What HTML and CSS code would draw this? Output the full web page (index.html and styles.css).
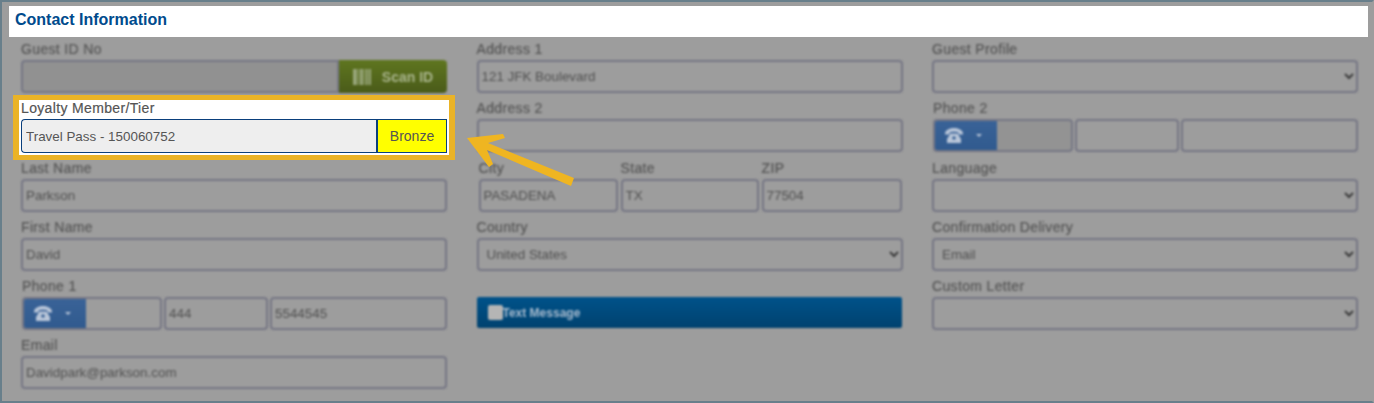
FILE: index.html
```html
<!DOCTYPE html>
<html lang="en">
<head>
  <meta charset="UTF-8" />
  <title>Contact Information</title>
  <link rel="stylesheet" href="styles.css">
</head>
<body>
  <div class="panel">
    <h2 class="panel-title">Contact Information</h2>

    <div class="form-grid">
      <div class="column">
        <div class="field dim">
          <label>Guest ID No</label>
          <div class="joined">
            <input class="input guest-id" type="text" />
            <button class="scan-btn">
              <svg width="18" height="16" viewBox="0 0 18 16"><path d="M0 0h4v16H0zM5 0h1v16H5zM7 0h3v16H7zM11 0h1v16h-1zM13 0h2v16h-2zM16 0h2v16h-2z" fill="#98a67a"/></svg>
              Scan ID
            </button>
          </div>
        </div>

        <div class="field loyalty">
          <label>Loyalty Member/Tier</label>
          <div class="joined">
            <input class="input loyalty-input" type="text" value="Travel Pass - 150060752" />
            <div class="tier">Bronze</div>
          </div>
        </div>

        <div class="field dim">
          <label>Last Name</label>
          <input class="input" type="text" value="Parkson" />
        </div>
        <div class="field dim">
          <label>First Name</label>
          <input class="input" type="text" value="David" />
        </div>
        <div class="field dim">
          <label class="nudge">Phone 1</label>
          <div class="phone-row nudge">
            <div class="phone-main">
              <div class="phone-btn">
                <svg class="phone-icon" width="18" height="15" viewBox="0 0 18 15"><path d="M0 5C1 1.500 5 0 9 0s8 1.500 9 5v1.500h-4.500V4.500C12 3.500 6 3.500 4.500 4.500v2H0zM5.500 5.500h7L16 11v4H2v-4zM9 8.300a1.700 1.700 0 1 0 0 3.400 1.700 1.700 0 0 0 0-3.400z" fill="#b9c6d9"/></svg>
                <span class="caret"></span>
              </div>
            </div>
            <input class="input" type="text" value="444" />
            <input class="input" type="text" value="5544545" />
          </div>
        </div>
        <div class="field dim">
          <label>Email</label>
          <input class="input" type="text" value="Davidpark@parkson.com" />
        </div>
      </div>

      <div class="column">
        <div class="field dim">
          <label>Address 1</label>
          <input class="input" type="text" value="121 JFK Boulevard" />
        </div>
        <div class="field dim">
          <label>Address 2</label>
          <input class="input" type="text" />
        </div>
        <div class="field dim">
          <div class="city-row">
            <div>
              <label>City</label>
              <input class="input" type="text" value="PASADENA" />
            </div>
            <div>
              <label>State</label>
              <input class="input" type="text" value="TX" />
            </div>
            <div>
              <label>ZIP</label>
              <input class="input" type="text" value="77504" />
            </div>
          </div>
        </div>
        <div class="field dim">
          <label>Country</label>
          <div class="select-wrap">
            <select class="input select"><option>United States</option></select>
            <svg class="chevron" width="10" height="7" viewBox="0 0 10 7"><path d="M1 1l4 4 4-4" fill="none" stroke="#3c3c3c" stroke-width="2"/></svg>
          </div>
        </div>
        <div class="field dim">
          <div class="text-msg">
            <span class="check"></span>Text Message
          </div>
        </div>
      </div>

      <div class="column">
        <div class="field dim">
          <label>Guest Profile</label>
          <div class="select-wrap">
            <select class="input select"><option></option></select>
            <svg class="chevron" width="10" height="7" viewBox="0 0 10 7"><path d="M1 1l4 4 4-4" fill="none" stroke="#3c3c3c" stroke-width="2"/></svg>
          </div>
        </div>
        <div class="field dim">
          <label class="nudge">Phone 2</label>
          <div class="phone-row nudge">
            <div class="phone-main shaded">
              <div class="phone-btn">
                <svg class="phone-icon" width="18" height="15" viewBox="0 0 18 15"><path d="M0 5C1 1.500 5 0 9 0s8 1.500 9 5v1.500h-4.500V4.500C12 3.500 6 3.500 4.500 4.500v2H0zM5.500 5.500h7L16 11v4H2v-4zM9 8.300a1.700 1.700 0 1 0 0 3.400 1.700 1.700 0 0 0 0-3.400z" fill="#b9c6d9"/></svg>
                <span class="caret"></span>
              </div>
            </div>
            <input class="input" type="text" />
            <input class="input" type="text" />
          </div>
        </div>
        <div class="field dim">
          <label>Language</label>
          <div class="select-wrap">
            <select class="input select"><option></option></select>
            <svg class="chevron" width="10" height="7" viewBox="0 0 10 7"><path d="M1 1l4 4 4-4" fill="none" stroke="#3c3c3c" stroke-width="2"/></svg>
          </div>
        </div>
        <div class="field dim">
          <label>Confirmation Delivery</label>
          <div class="select-wrap">
            <select class="input select"><option>Email</option></select>
            <svg class="chevron" width="10" height="7" viewBox="0 0 10 7"><path d="M1 1l4 4 4-4" fill="none" stroke="#3c3c3c" stroke-width="2"/></svg>
          </div>
        </div>
        <div class="field dim">
          <label>Custom Letter</label>
          <div class="select-wrap">
            <select class="input select"><option></option></select>
            <svg class="chevron" width="10" height="7" viewBox="0 0 10 7"><path d="M1 1l4 4 4-4" fill="none" stroke="#3c3c3c" stroke-width="2"/></svg>
          </div>
        </div>
      </div>
    </div>

    <svg class="arrow" width="112" height="54" viewBox="0 0 112 54">
      <path d="M1 5 L37 1 L39 5 L22 10 L108 45 L105 53 L21 17 L27 31 L23 34 Z" fill="#efb521"/>
    </svg>
  </div>
</body>
</html>
```

FILE: styles.css
```css
* {
  box-sizing: border-box;
}

html, body {
  margin: 0;
  height: 100%;
}

body {
  font-family: 'Liberation Sans', Arial, sans-serif;
  overflow: hidden;
}

.panel {
  position: relative;
  height: 403px;
  background-color: #9d9d9d;
  border: 2px solid #687f8b;
  border-right-color: #9d9d9d;
  padding: 4px 4px 0 7px;
}

.panel-title {
  margin: 0;
  height: 31px;
  line-height: 27px;
  padding-left: 6px;
  background-color: #fff;
  color: #004b8d;
  font-size: 16px;
  font-weight: bold;
}

.form-grid {
  display: grid;
  grid-template-columns: repeat(3, 426px);
  column-gap: 29.500px;
  padding: 2px 0 0 12px;
}

.field {
  height: 59px;
}

.field:nth-child(2) {
  height: 60px;
}

.field:nth-child(n+3) label {
  height: 20.500px;
}

.dim {
  filter: blur(0.8px);
}

label {
  display: block;
  height: 21px;
  line-height: 20px;
  font-size: 14px;
  letter-spacing: 0.35px;
  color: #555;
  -webkit-text-stroke: 0.2px #555;
}

.input {
  display: block;
  width: 100%;
  height: 33px;
  padding: 0 3px;
  background-color: #9d9d9d;
  border: 2px solid #757684;
  border-radius: 4px;
  font-family: inherit;
  font-size: 13.400px;
  color: #505050;
  outline: none;
}

.joined {
  display: flex;
  height: 33px;
}

.guest-id {
  flex: 1;
  min-width: 0;
  background-color: #919191;
  border-radius: 4px 0 0 4px;
}

.scan-btn {
  width: 108px;
  display: flex;
  align-items: center;
  justify-content: center;
  gap: 11px;
  border: none;
  border-radius: 0 4px 4px 0;
  background: linear-gradient(to bottom, #5f7620, #4a5b19);
  color: #a9b58c;
  font-family: inherit;
  font-size: 14px;
  font-weight: bold;
}

.loyalty {
  position: relative;
  z-index: 1;
}

/* white box with the gold frame around the highlighted field */
.loyalty::before {
  content: "";
  position: absolute;
  top: -3px;
  left: -8px;
  right: -8px;
  bottom: -2px;
  background-color: #fff;
  border: solid #eab327;
  border-width: 5px 6px;
  z-index: -1;
}

.loyalty .joined {
  height: 34px;
}

.loyalty-input {
  flex: 1;
  min-width: 0;
  height: 34px;
  padding: 0 4px;
  background-color: #eee;
  border: 1px solid #0a3f7c;
  border-right: none;
  border-radius: 4px 0 0 4px;
  color: #555;
}

.tier {
  width: 71px;
  display: flex;
  align-items: center;
  justify-content: center;
  background-color: #ff0;
  border: 1px solid #0a3f7c;
  border-left-width: 2px;
  font-size: 14px;
  color: #555;
}

.nudge {
  margin-left: 1px;
}

.phone-row {
  display: grid;
  grid-template-columns: 140px 104px 1fr;
  column-gap: 2px;
  width: 425px;
}

.phone-main {
  height: 33px;
  background-color: #9d9d9d;
  border: 2px solid #757684;
  border-radius: 4px;
  overflow: hidden;
}

.phone-main.shaded {
  background-color: #939393;
}

.phone-btn {
  width: 64px;
  margin: -2px 0 0 -2px;
  height: 33px;
  display: flex;
  align-items: center;
  gap: 13px;
  padding-left: 12px;
  background: linear-gradient(to bottom, #3a6398, #305a8e);
}

.caret {
  border-left: 3px solid transparent;
  border-right: 3px solid transparent;
  border-top: 3px solid #b9c6d9;
}

.city-row {
  display: grid;
  grid-template-columns: 139px 138px 140px;
  column-gap: 3px;
  padding-left: 2px;
}

.select-wrap {
  position: relative;
}

.select {
  appearance: none;
  -webkit-appearance: none;
  padding: 0 8px;
  color: #505050;
}

.chevron {
  position: absolute;
  right: 4px;
  top: 13px;
}

.text-msg {
  margin-top: 21px;
  width: 425px;
  height: 31px;
  display: flex;
  align-items: center;
  padding-left: 11px;
  border-radius: 2px;
  background: linear-gradient(to bottom, #00528a, #00426f);
  color: #a9bccf;
  font-size: 12px;
  font-weight: bold;
}

.check {
  width: 15px;
  height: 15px;
  background-color: #b5b5b5;
  border-radius: 2px;
}

.arrow {
  position: absolute;
  left: 464px;
  top: 131px;
}
```
